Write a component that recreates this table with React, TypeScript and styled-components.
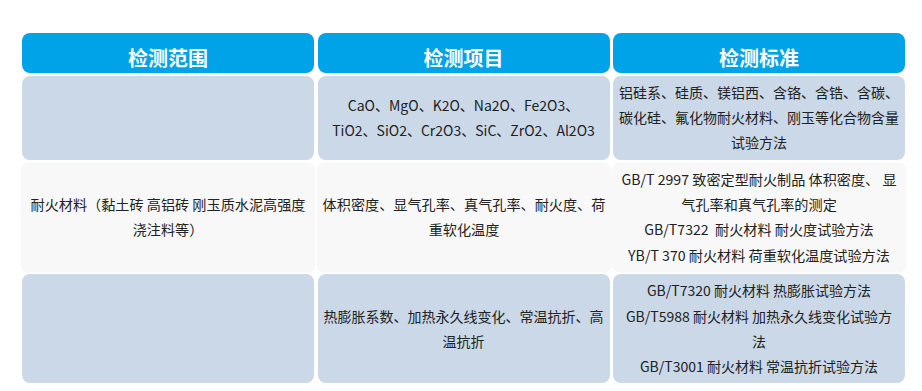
import { Fragment } from 'react';
import styled, { createGlobalStyle } from 'styled-components';

const GlobalStyle = createGlobalStyle`
  body {
    margin: 0;
    background: #fff;
    font-family: "Noto Sans CJK SC", "Noto Sans", sans-serif;
  }
`;

const Page = styled.div`
  padding: 33px 0 0 22px;
`;

const Table = styled.div`
  width: 883px;
  display: grid;
  grid-template-columns: repeat(3, 1fr);
  gap: 3px 3.5px;
`;

const HeadCell = styled.div`
  height: 40px;
  box-sizing: border-box;
  padding-top: 8px;
  display: flex;
  align-items: center;
  justify-content: center;
  background: #00a2e8;
  border-radius: 8px;
  color: #fff;
  font-size: 20px;
  font-weight: bold;
`;

const Cell = styled.div<{ $light?: boolean; $lifted?: boolean }>`
  box-sizing: border-box;
  padding: 4px 5px;
  display: flex;
  flex-direction: column;
  align-items: center;
  justify-content: center;
  background: ${(p) => (p.$light ? '#f8f8f8' : '#cad8e8')};
  border-radius: 8px;
  color: #222;
  font-size: 14px;
  line-height: 1.8;
  text-align: center;
  transform: ${(p) => (p.$lifted ? 'scale(1.01)' : 'none')};
`;

const Line = styled.div`
  white-space: pre-line;
`;

const headers = ['检测范围', '检测项目', '检测标准'];

const rows = [
  {
    light: false,
    scope: [] as string[],
    items: ['CaO、MgO、K2O、Na2O、Fe2O3、', 'TiO2、SiO2、Cr2O3、SiC、ZrO2、Al2O3'],
    standards: ['铝硅系、硅质、镁铝西、含铬、含锆、含碳、碳化硅、氟化物耐火材料、刚玉等化合物含量试验方法'],
  },
  {
    light: true,
    scope: ['耐火材料（黏土砖 高铝砖 刚玉质水泥高强度浇注料等）'],
    items: ['体积密度、显气孔率、真气孔率、耐火度、荷重软化温度'],
    standards: [
      'GB/T 2997 致密定型耐火制品 体积密度、 显气孔率和真气孔率的测定',
      'GB/T7322\u00a0 耐火材料 耐火度试验方法',
      'YB/T 370 耐火材料 荷重软化温度试验方法',
    ],
  },
  {
    light: false,
    scope: [] as string[],
    items: ['热膨胀系数、加热永久线变化、常温抗折、高温抗折'],
    standards: [
      'GB/T7320 耐火材料 热膨胀试验方法',
      'GB/T5988 耐火材料 加热永久线变化试验方\n法',
      'GB/T3001 耐火材料 常温抗折试验方法',
    ],
  },
];

export default function App() {
  return (
    <Page>
      <GlobalStyle />
      <Table>
        {headers.map((h) => (
          <HeadCell key={h}>{h}</HeadCell>
        ))}
        {rows.map((r, i) => (
          <Fragment key={i}>
            <Cell $light={r.light} $lifted={r.light}>
              {r.scope.map((t) => (
                <Line key={t}>{t}</Line>
              ))}
            </Cell>
            <Cell $light={r.light} $lifted={r.light}>
              {r.items.map((t) => (
                <Line key={t}>{t}</Line>
              ))}
            </Cell>
            <Cell $light={r.light} $lifted={r.light}>
              {r.standards.map((t) => (
                <Line key={t}>{t}</Line>
              ))}
            </Cell>
          </Fragment>
        ))}
      </Table>
    </Page>
  );
}
